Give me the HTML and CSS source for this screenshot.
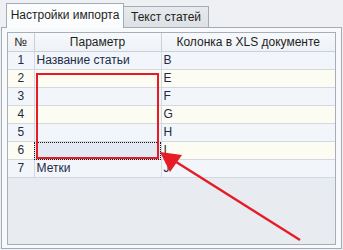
FILE: index.html
```html
<!DOCTYPE html>
<html lang="ru">
<head>
    <meta charset="UTF-8">
    <title>Настройки импорта</title>
    <link rel="stylesheet" href="styles.css">
</head>
<body>

    <div class="tabs">
        <div class="tab active">Настройки импорта</div>
        <div class="tab">Текст статей</div>
    </div>

    <div class="panel">
        <div class="grid">
            <table>
                <colgroup>
                    <col class="col-num">
                    <col class="col-param">
                    <col>
                </colgroup>
                <tr class="head">
                    <th>№</th>
                    <th>Параметр</th>
                    <th>Колонка в XLS документе</th>
                </tr>
                <tr class="odd"><td class="num">1</td><td>Название статьи</td><td>B</td></tr>
                <tr class="even"><td class="num">2</td><td></td><td>E</td></tr>
                <tr class="odd"><td class="num">3</td><td></td><td>F</td></tr>
                <tr class="even"><td class="num">4</td><td></td><td>G</td></tr>
                <tr class="odd"><td class="num">5</td><td></td><td>H</td></tr>
                <tr class="even"><td class="num">6</td><td class="focused"></td><td>I</td></tr>
                <tr class="odd"><td class="num">7</td><td>Метки</td><td>J</td></tr>
            </table>
        </div>
    </div>

    <!-- annotation drawn over the screenshot -->
    <div class="mark"></div>
    <svg class="arrow" width="343" height="250" viewBox="0 0 343 250">
        <line x1="300" y1="240" x2="173" y2="160" stroke="#e61b25" stroke-width="2.4"/>
        <polygon points="160,152 182,155 170,172" fill="#e61b25"/>
    </svg>

</body>
</html>
```

FILE: styles.css
```css
body {
    margin: 0;
    width: 343px;
    height: 250px;
    background-color: #eef0f3;
    font-family: "Liberation Sans", Arial, sans-serif;
    font-size: 12px;
    color: #1c2b48;
    position: relative;
    overflow: hidden;
}

.tabs {
    display: flex;
    align-items: flex-end;
    padding: 3px 0 0 6px;
    box-sizing: border-box;
    height: 27px;
}

.tab {
    height: 21px;
    width: 85px;
    box-sizing: border-box;
    border: 1px solid #a3abb6;
    border-bottom: none;
    border-left: none;
    background: linear-gradient(#e8eaed, #dde0e4);
    display: flex;
    align-items: center;
    justify-content: center;
    color: #1e1e1e;
}

.tab.active {
    height: 25px;
    width: 118px;
    border-left: 1px solid #a3abb6;
    background: #fbfcfd;
    position: relative;
    top: 1px;
    padding-bottom: 2px;
}

.panel {
    margin: 0 1px;
    height: 222px;
    box-sizing: border-box;
    border: 1px solid #a3abb6;
    background-color: #f8f9fb;
    padding: 4px 5px;
}

.grid {
    height: 213px;
    box-sizing: border-box;
    border: 1px solid #a7aeb8;
    background-color: #e8ebf0;
}

table {
    border-collapse: collapse;
    width: 100%;
    table-layout: fixed;
}

.col-num {
    width: 26px;
}

.col-param {
    width: 127px;
}

th, td {
    padding: 0 2px;
    height: 17px;
    border-right: 1px solid #d3d9e1;
    border-bottom: 1px solid #d3d9e1;
    white-space: nowrap;
    overflow: hidden;
    line-height: 17px;
}

th:last-child, td:last-child {
    border-right: none;
}

.head th {
    height: 18px;
    font-weight: normal;
    color: #1e1e1e;
    background: linear-gradient(#f7f9fb, #eef2f6);
    border-right: 1px solid #c9d0d9;
    border-bottom: 1px solid #c9d0d9;
}

.head th:last-child {
    border-right: none;
}

td.num {
    text-align: center;
}

.odd {
    background-color: #f2f5fa;
}

.even {
    background-color: #fdfcf3;
}

.focused {
    background-color: #e2e9f3;
    outline: 1px dotted #1a1a1a;
    outline-offset: -1px;
}

.mark {
    position: absolute;
    left: 36px;
    top: 73px;
    width: 119px;
    height: 82px;
    border: 2px solid #e61b25;
}

.arrow {
    position: absolute;
    left: 0;
    top: 0;
}
```
